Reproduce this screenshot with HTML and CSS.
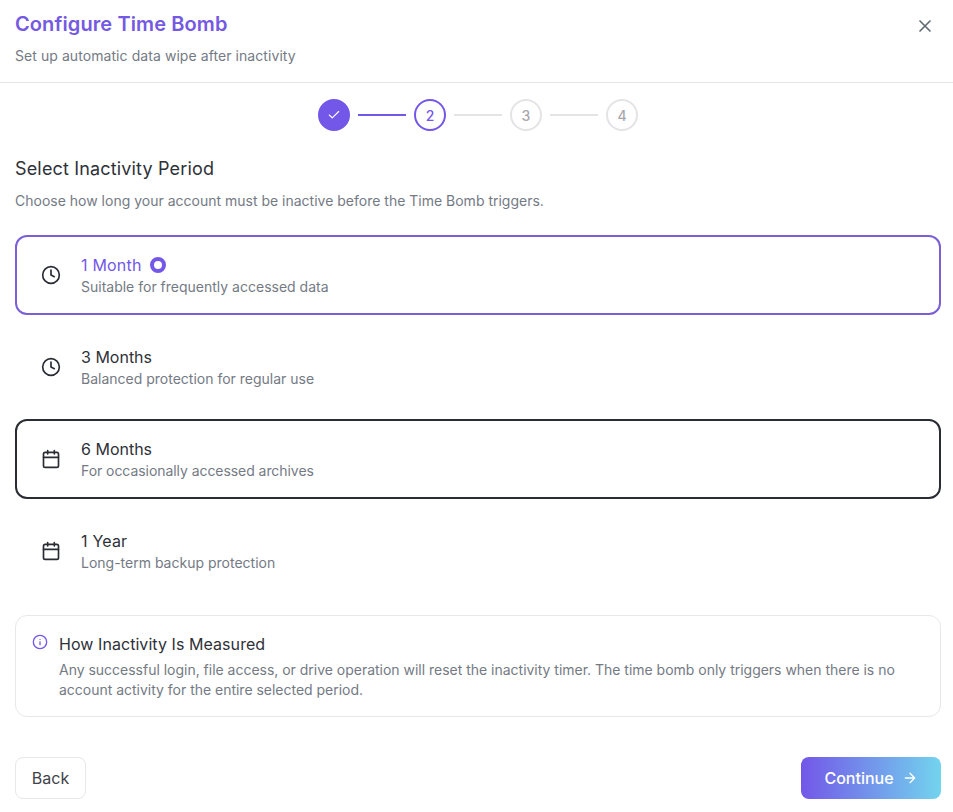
FILE: index.html
```html
<!DOCTYPE html>
<html lang="en">
<head>
<meta charset="utf-8">
<title>Configure Time Bomb</title>
<link rel="stylesheet" href="styles.css">
</head>
<body>
<div class="dialog">
  <header class="head">
    <div>
      <h1 class="title">Configure Time Bomb</h1>
      <p class="subtitle">Set up automatic data wipe after inactivity</p>
    </div>
    <button class="close" aria-label="Close">
      <svg width="20" height="20" viewBox="0 0 24 24" fill="none" stroke="currentColor" stroke-width="2" stroke-linecap="round"><path d="M18 6 6 18M6 6l12 12"/></svg>
    </button>
  </header>
  <div class="stepper">
    <span class="step done"><svg width="14" height="14" viewBox="0 0 24 24" fill="none" stroke="currentColor" stroke-width="2" stroke-linecap="round" stroke-linejoin="round"><path d="M20 6 9 17l-5-5"/></svg></span>
    <span class="line on"></span>
    <span class="step current">2</span>
    <span class="line"></span>
    <span class="step">3</span>
    <span class="line"></span>
    <span class="step">4</span>
  </div>
  <main class="body">
    <h2 class="section">Select Inactivity Period</h2>
    <p class="lead">Choose how long your account must be inactive before the Time Bomb triggers.</p>
    <div class="options">
      <div class="option selected">
        <svg class="ico" width="20" height="20" viewBox="0 0 24 24" fill="none" stroke="currentColor" stroke-width="2" stroke-linecap="round" stroke-linejoin="round"><circle cx="12" cy="12" r="10"/><path d="M12 6v6l4 2"/></svg>
        <div><div class="name"><span class="one">1 Month</span> <span class="dot"></span></div><div class="desc">Suitable for frequently accessed data</div></div>
      </div>
      <div class="option">
        <svg class="ico" width="20" height="20" viewBox="0 0 24 24" fill="none" stroke="currentColor" stroke-width="2" stroke-linecap="round" stroke-linejoin="round"><circle cx="12" cy="12" r="10"/><path d="M12 6v6l4 2"/></svg>
        <div><div class="name">3 Months</div><div class="desc">Balanced protection for regular use</div></div>
      </div>
      <div class="option focused">
        <svg class="ico" width="20" height="20" viewBox="0 0 24 24" fill="none" stroke="currentColor" stroke-width="2" stroke-linecap="round" stroke-linejoin="round"><path d="M8 2v4M16 2v4"/><rect x="3" y="4" width="18" height="18" rx="2"/><path d="M3 10h18"/></svg>
        <div><div class="name">6 Months</div><div class="desc tight">For occasionally accessed archives</div></div>
      </div>
      <div class="option">
        <svg class="ico" width="20" height="20" viewBox="0 0 24 24" fill="none" stroke="currentColor" stroke-width="2" stroke-linecap="round" stroke-linejoin="round"><path d="M8 2v4M16 2v4"/><rect x="3" y="4" width="18" height="18" rx="2"/><path d="M3 10h18"/></svg>
        <div><div class="name"><span class="one">1 Year</span></div><div class="desc">Long-term backup protection</div></div>
      </div>
    </div>
    <section class="info">
      <svg class="info-ico" width="16" height="16" viewBox="0 0 24 24" fill="none" stroke="currentColor" stroke-width="2" stroke-linecap="round" stroke-linejoin="round"><circle cx="12" cy="12" r="10"/><path d="M12 16v-4M12 8h.01"/></svg>
      <div>
        <h3 class="info-title">How Inactivity Is Measured</h3>
        <p class="info-text">Any successful login, file access, or drive operation will reset the inactivity timer. The time bomb only triggers when there is no account activity for the entire selected period.</p>
      </div>
    </section>
    <footer class="actions">
      <button class="btn back">Back</button>
      <button class="btn next">Continue
        <svg width="16" height="16" viewBox="0 0 24 24" fill="none" stroke="currentColor" stroke-width="2" stroke-linecap="round" stroke-linejoin="round"><path d="M5 12h14M12 5l7 7-7 7"/></svg>
      </button>
    </footer>
  </main>
</div>
</body>
</html>
```

FILE: styles.css
```css
* { box-sizing: border-box; }
html, body { margin: 0; padding: 0; background: #fff; }
body { font-family: Inter, "Liberation Sans", sans-serif; color: #2e3138; overflow: hidden; }
.dialog { width: 953px; height: 812px; }
.head { height: 83px; padding: 12px 15px 0; border-bottom: 1px solid #e4e4e7; display: flex; justify-content: space-between; align-items: flex-start; }
.title { margin: 0; font-size: 20px; line-height: 24px; font-weight: 600; color: #7459e3; letter-spacing: 0.1px; }
.subtitle { margin: 10px 0 0; font-size: 14px; line-height: 20px; color: #747a84; letter-spacing: 0.07px; }
.close { border: 0; background: none; padding: 0; width: 20px; height: 20px; margin: 4px 3px 0 0; color: #5f6b73; display: flex; }
.stepper { display: flex; justify-content: center; align-items: center; gap: 8px; margin-top: 16px; height: 32px; padding-left: 3px; }
.step { width: 32px; height: 32px; border-radius: 50%; border: 2px solid #e4e4e7; color: #a6a8ae; font-size: 14px; font-weight: 500; display: flex; align-items: center; justify-content: center; }
.step.done { background: #7357e8; border-color: #7357e8; color: #fff; }
.step.current { border-color: #7357e8; color: #7357e8; }
.line { width: 48px; height: 2px; background: #e4e4e7; }
.line.on { background: #7357e8; }
.body { padding: 0 12px 0 15px; }
.section { margin: 26px 0 0; font-size: 18px; line-height: 24px; font-weight: 400; letter-spacing: 0.16px; color: #2e3138; }
.lead { margin: 10px 0 0; font-size: 14px; line-height: 20px; color: #747a84; }
.options { margin-top: 24px; display: flex; flex-direction: column; gap: 12px; }
.option { height: 80px; border: 2px solid transparent; border-radius: 12px; padding: 0 24px; display: flex; align-items: center; gap: 20px; }
.option.selected { border-color: #7a5fd6; }
.option.selected .name { color: #7357e8; }
.option.focused { border-color: #2a2c34; }
.ico { flex: none; color: #2a2c34; }
.name { font-size: 16px; line-height: 24px; font-weight: 400; color: #2e3138; display: flex; align-items: center; gap: 8px; }
.one { letter-spacing: 0.2px; }
.dot { width: 16px; height: 16px; border-radius: 50%; border: 4px solid #7357e8; background: #fff; }
.desc { font-size: 14px; line-height: 20px; color: #747a84; }
.desc.tight { letter-spacing: -0.06px; }
.info { margin-top: 24px; height: 102px; border: 1px solid #e8e8eb; border-radius: 12px; padding: 16px; display: flex; gap: 11px; }
.info-ico { flex: none; color: #7357e8; margin-top: 2px; }
.info-title { margin: 0 0 4px; font-size: 16px; line-height: 24px; font-weight: 400; letter-spacing: 0.06px; color: #2e3138; }
.info-text { margin: 0; font-size: 14px; line-height: 20px; color: #747a84; letter-spacing: -0.015px; }
.actions { margin-top: 40px; display: flex; justify-content: space-between; }
.btn { height: 42px; border-radius: 8px; font: 500 16px/24px Inter, "Liberation Sans", sans-serif; display: flex; align-items: center; justify-content: center; }
.back { width: 71px; border: 1px solid #e8e8eb; background: #fff; color: #3f424a; font-weight: 400; }
.next { width: 140px; border: 0; color: #fff; gap: 8px; background: linear-gradient(90deg, #7357e8, #72d4ee); }
```
